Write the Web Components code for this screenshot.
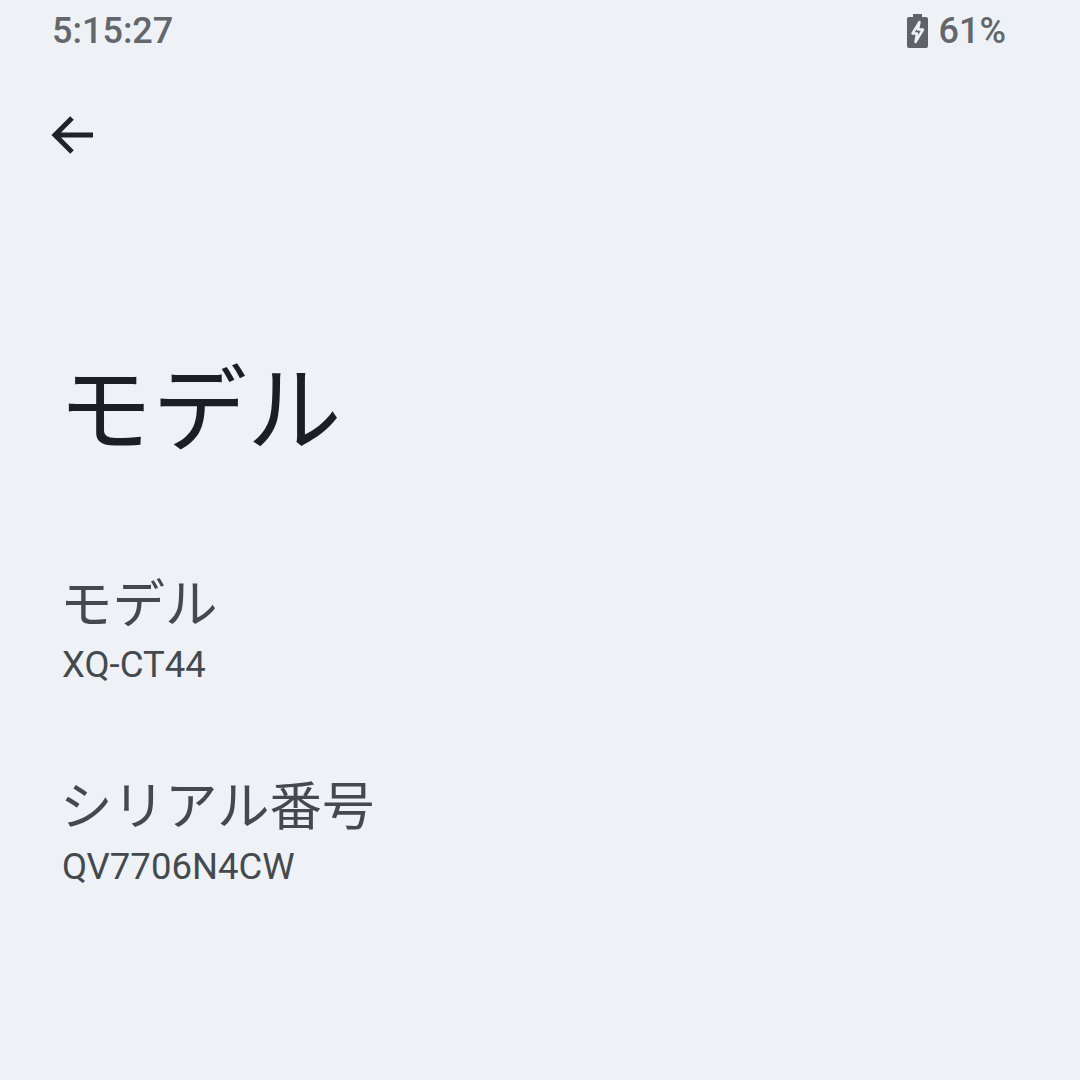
<!DOCTYPE html>
<html lang="ja">
<head>
<meta charset="utf-8">
<title>モデル</title>
<style>
  html, body { margin: 0; padding: 0; background: #eef2f6; }
  body { width: 1080px; height: 1080px; overflow: hidden; font-family: Roboto, "Noto Sans CJK JP", sans-serif; }
</style>
</head>
<body>
<model-page>
  <status-bar slot="status" time="5:15:27" level="61%"></status-bar>
  <back-bar slot="nav"></back-bar>
  <page-title slot="title">モデル</page-title>
  <info-row title="モデル" value="XQ-CT44"></info-row>
  <info-row title="シリアル番号" value="QV7706N4CW"></info-row>
</model-page>
<script>
(function () {
    const font = 'Roboto, "Noto Sans CJK JP", sans-serif';

    class ModelPage extends HTMLElement {
        constructor() {
            super();
            this.attachShadow({ mode: "open" }).innerHTML = `
                <style>
                    :host { display: flex; flex-direction: column; width: 1080px; height: 1080px; font-family: ${font}; }
                    #rows { display: flex; flex-direction: column; gap: 82px; padding: 0 62px; margin-top: 92px; }
                </style>
                <slot name="status"></slot>
                <slot name="nav"></slot>
                <slot name="title"></slot>
                <div id="rows"><slot></slot></div>`;
        }
    }

    class StatusBar extends HTMLElement {
        connectedCallback() {
            if (this.shadowRoot) return;
            this.attachShadow({ mode: "open" }).innerHTML = `
                <style>
                    :host { display: flex; justify-content: space-between; align-items: center; height: 62px; padding: 0 74px 0 52px; color: #63676b; font-size: 36px; font-weight: 500; box-sizing: border-box; }
                    #right { display: flex; align-items: center; gap: 11px; }
                    svg { display: block; margin-top: -1px; }
                </style>
                <span>${this.getAttribute("time")}</span>
                <div id="right">
                    <svg width="21" height="34" viewBox="0 0 21 34">
                        <path fill="#5f6368" d="M6 0h9v3h4a2 2 0 0 1 2 2v27a2 2 0 0 1-2 2H2a2 2 0 0 1-2-2V5a2 2 0 0 1 2-2h4z"/>
                        <path fill="#5f6368" stroke="#eef2f6" stroke-width="2.500" stroke-linejoin="round" d="M12.500 8L5.500 19.500h4.500L8.500 28l7.500-12.500h-5z"/>
                    </svg>
                    <span>${this.getAttribute("level")}</span>
                </div>`;
        }
    }

    class BackBar extends HTMLElement {
        constructor() {
            super();
            this.attachShadow({ mode: "open" }).innerHTML = `
                <style>
                    :host { display: block; height: 148px; padding: 50px 0 0 50px; box-sizing: border-box; }
                    svg { display: block; }
                </style>
                <svg width="46" height="46" viewBox="0 0 46 46" fill="none" stroke="#1f2328" stroke-width="5">
                    <path d="M43 23H6M22 6L5 23l17 17"/>
                </svg>`;
        }
    }

    class PageTitle extends HTMLElement {
        constructor() {
            super();
            this.attachShadow({ mode: "open" }).innerHTML = `
                <style>
                    :host { display: block; padding: 0 0 0 58px; margin-top: 137px; font-size: 94.500px; line-height: 130px; color: #1b1f24; }
                </style>
                <slot></slot>`;
        }
    }

    class InfoRow extends HTMLElement {
        connectedCallback() {
            if (this.shadowRoot) return;
            this.attachShadow({ mode: "open" }).innerHTML = `
                <style>
                    :host { display: block; color: #44494e; }
                    #title { font-size: 52.500px; line-height: 72px; margin-left: -2px; }
                    #value { font-size: 36.500px; line-height: 48px; }
                </style>
                <div id="title">${this.getAttribute("title")}</div>
                <div id="value">${this.getAttribute("value")}</div>`;
        }
    }

    customElements.define("model-page", ModelPage);
    customElements.define("status-bar", StatusBar);
    customElements.define("back-bar", BackBar);
    customElements.define("page-title", PageTitle);
    customElements.define("info-row", InfoRow);
})();
</script>
</body>
</html>
